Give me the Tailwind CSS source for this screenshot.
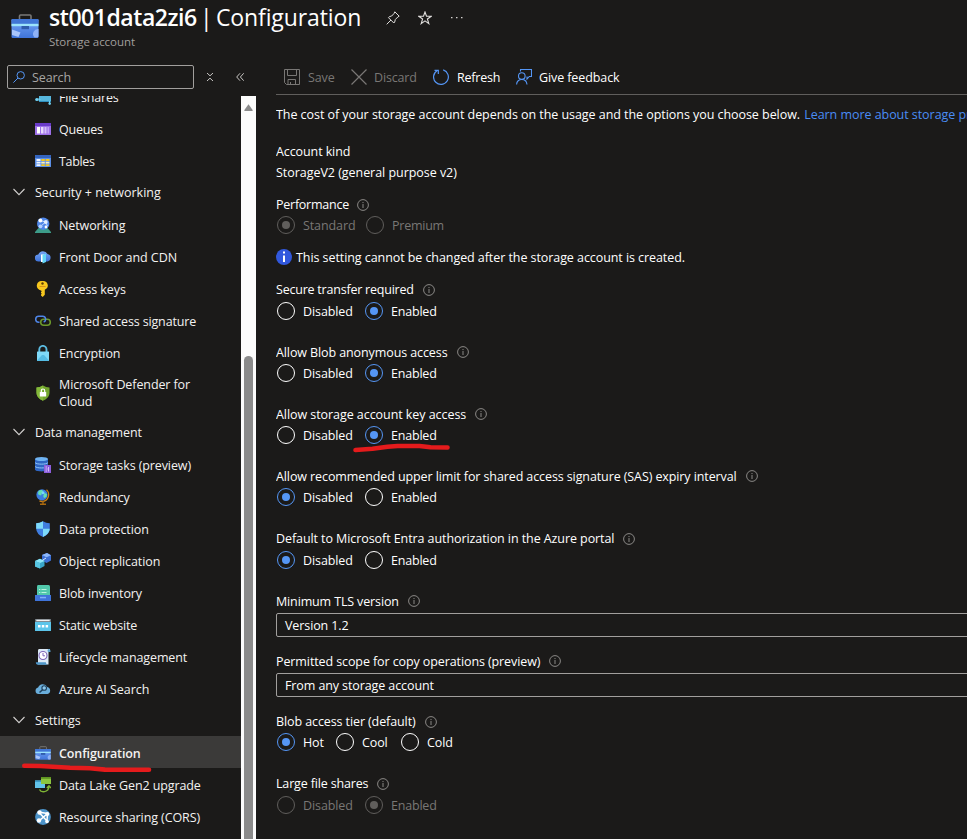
<!DOCTYPE html>
<html lang="en">
<head>
<meta charset="utf-8">
<title>st001data2zi6 | Configuration</title>
<script src="https://cdn.jsdelivr.net/npm/@tailwindcss/browser@4"></script>
</head>
<body class="bg-[#1b1a19]">
<svg class="absolute h-0 w-0">
  <defs>
    <linearGradient id="blueV" x1="0" y1="0" x2="0" y2="1"><stop offset="0" stop-color="#76a5f5"/><stop offset="1" stop-color="#3f74da"/></linearGradient>
    <symbol id="info" viewBox="0 0 12 12"><circle cx="6" cy="6" r="5.4" fill="none" stroke="#8a8886"/><path d="M6 5v4M6 3v1.1" stroke="#8a8886" fill="none"/></symbol>
    <symbol id="chev" viewBox="0 0 12 8"><path d="M.5 1 6 6.7 11.5 1" fill="none" stroke="#d2d0ce" stroke-width="1.1"/></symbol>
    <symbol id="toolbox" viewBox="0 0 28 24">
      <path d="M8.5 5V2a1 1 0 0 1 1-1h9.500a1 1 0 0 1 1 1v3" fill="none" stroke="#7b7977" stroke-width="1.6"/>
      <rect x=".5" y="5" width="27" height="19" rx="1.200" fill="url(#blueV)"/>
      <rect x=".5" y="5" width="27" height="5" rx="1" fill="#4076d6"/>
      <rect x=".5" y="9.800" width="27" height="2.400" fill="#9be3fb"/>
      <rect x="10.500" y="12" width="7.500" height="3.200" fill="#2f5cab"/>
      <path d="m1 15.500 8.500 3-2 4.500L1 21z" fill="#a9c5fa"/><path d="M27.500 15a5 5 0 0 0-4 8.500h3l1-1z" fill="#8fb2f6"/>
    </symbol>
  </defs>
</svg>
<div class="relative flex h-[839px] w-[967px] flex-col overflow-hidden whitespace-nowrap bg-[#1b1a19] font-['Open_Sans','Noto_Sans',sans-serif] text-[12.5px] leading-[16px] tracking-[-0.1px] text-[#f3f2f1]">

  <header class="flex h-[60px] shrink-0">
    <svg class="mt-[14px] ml-[11px] h-6 w-7"><use href="#toolbox"/></svg>
    <div class="ml-[10px] flex flex-col">
      <div class="flex h-[34px] items-center pt-[3px]">
        <h1 class="-mt-[4px] flex text-[23px] leading-[30px] tracking-[-0.12px] text-white"><span class="w-[151px] font-semibold tracking-[-0.45px]">st001data2zi6</span><span class="w-[16px]">|</span><span class="w-[147px]">Configuration</span></h1>
        <svg class="-mt-[1px] ml-[23px] h-[14px] w-[14px]" viewBox="0 0 14 14" fill="none" stroke="#e1dfdd"><path d="M8.800.8 13.200 5.200 11.800 6 9.300 8.500 8.700 11 7.800 12 2.500 6.700 3.300 5.700 5.700 5 8 2.500zM5 9 .7 13.300"/></svg>
        <svg class="-mt-[1px] ml-[18px] h-[14px] w-[14px]" viewBox="0 0 14 14" fill="none" stroke="#e1dfdd" stroke-width="1.100"><path d="m7 1 1.500 4.300h4.700L9.400 8l1.400 4.600L7 9.900l-3.800 2.700L4.600 8 .8 5.300h4.700z"/></svg>
        <svg class="-mt-[2px] ml-[19px] h-[3px] w-[12px]" viewBox="0 0 12 3" fill="#d2d0ce"><path d="M0 1h1.500v1.300H0zM5 1h1.500v1.300H5zM10 1h1.500v1.300H10z"/></svg>
      </div>
      <p class="text-[11.500px] tracking-[-0.040px] text-[#a19f9d]">Storage account</p>
    </div>
  </header>

  <div class="flex min-h-0 flex-1">
    <aside class="flex w-[256px] shrink-0 flex-col">
      <div class="flex h-[36px] shrink-0 items-start pt-[5px] pl-[7px]">
        <div class="flex h-6 w-[187px] items-center rounded-[2px] border border-[#a19f9d] pl-[5px] text-[#a8a6a4]">
          <svg class="mr-[7px] h-3 w-3" viewBox="0 0 12 12" fill="none" stroke="#5596f5"><circle cx="7.700" cy="4.300" r="3.700"/><path d="M5 7 .4 11.600"/></svg><span class="pt-[2px]">Search</span>
        </div>
        <svg class="mt-2 ml-[12px] h-2 w-[8px]" viewBox="0 0 8 8" fill="none" stroke="#c8c6c4"><path d="M1 0l3 2.800L7 0M1 8l3-2.800L7 8"/></svg>
        <svg class="mt-2 ml-[22px] h-2 w-[8px]" viewBox="0 0 8 8" fill="none" stroke="#c8c6c4"><path d="M4 .3.700 4 4 7.700M7.700.3 4.400 4l3.300 3.700"/></svg>
      </div>
      <div class="flex min-h-0 flex-1">
        <nav class="-mt-[16px] w-[241px] text-[#f3f2f1] [clip-path:inset(16px_0_0_0)] [&_span]:pt-[2px]">
          <a class="flex h-8 items-center pt-[2px] pl-[35px]"><svg class="mr-2 h-4 w-4" viewBox="0 0 16 16"><rect x="4" y="5" width="12" height="8" fill="#57b7dd"/><path d="M4 12h12v1H4z" fill="#2f8fc0"/><circle cx="1.700" cy="10.500" r="1.500" fill="#6fd0f2"/><path d="M2 10h3v1H2zM14.500 12v2" stroke="#6fd0f2" fill="none"/><circle cx="14.700" cy="14.600" r="1.300" fill="#6fd0f2"/></svg><span class="tracking-[-0.2px]">File shares</span></a>
          <a class="flex h-8 items-center pt-[2px] pl-[35px]"><svg class="mr-2 h-4 w-4" viewBox="0 0 16 16"><rect y="2" width="16" height="12" rx=".6" fill="#9d70e8"/><path d="M0 2.500q0-.5.5-.5h15q.5 0 .5.500V5H0z" fill="#6a3bc9"/><path d="M2 6h3v6.500H2z" fill="#fff"/><path d="M6 6h2.500v6.500H6z" fill="#e6dafc"/><path d="M9.500 6h2v6.500h-2z" fill="#d4c0f8"/><path d="M12.500 6H14v6.500h-1.500z" fill="#c1a5f4"/></svg><span class="tracking-[-0.2px]">Queues</span></a>
          <a class="flex h-8 items-center pt-[2px] pl-[35px]"><svg class="mr-2 h-4 w-4" viewBox="0 0 16 16"><rect y="2" width="16" height="12" rx=".6" fill="#5b8fe6"/><path d="M0 2.500q0-.5.5-.5h15q.5 0 .5.500V5H0z" fill="#3464bd"/><path d="M1.500 6h4v2h-4zM1.500 8.800h4v1.800h-4zM1.500 11.300h4V13h-4z" fill="#eef4ff"/><path d="M6.300 6h3.500v2H6.300zM10.700 6h3.800v2h-3.800zM6.300 11.300h3.500V13H6.300zM10.700 11.300h3.800V13h-3.800z" fill="#f5c91b"/><path d="M6.300 8.800h3.500v1.800H6.300zM10.700 8.800h3.800v1.800h-3.800z" fill="#fff0b0"/></svg><span class="tracking-[-0.35px]">Tables</span></a>

          <div class="flex h-8 items-center pl-[13px]"><svg class="mr-[10px] h-2 w-3"><use href="#chev"/></svg><span class="tracking-[0px]">Security + networking</span></div>
          <a class="flex h-8 items-center pt-[2px] pl-[35px]"><svg class="mr-2 h-4 w-4" viewBox="0 0 16 16"><path d="M3.500 11h9L16 15v1H0v-1z" fill="#3d9c89"/><circle cx="8.200" cy="6.700" r="6.200" fill="#4f86e8"/><path d="M5 3.500 10.500 5l-5 4.500M10.500 5l2 4" stroke="#cfe2ff" stroke-width=".9" fill="none"/><circle cx="5.400" cy="3.500" r="1.900" fill="#fff"/><circle cx="10.800" cy="5" r="1.900" fill="#e3eeff"/><circle cx="5.500" cy="9.300" r="1.900" fill="#b5d0ff"/><circle cx="11" cy="10" r="1.400" fill="#fff"/></svg><span>Networking</span></a>
          <a class="flex h-8 items-center pt-[2px] pl-[35px]"><svg class="mr-2 h-4 w-4" viewBox="0 0 16 16"><path d="M3.500 12.500A3.500 3.500 0 0 1 3.300 5.400 5 5 0 0 1 12.500 5a3.800 3.800 0 0 1-.2 7.500z" fill="url(#blueV)"/><path d="M6 5.500h3.500v7.500H6z" fill="#fff"/><path d="M7.500 6 11 4.500v8.500l-3.500 1.500z" fill="#62d6f8"/></svg><span class="tracking-[-0.04px]">Front Door and CDN</span></a>
          <a class="flex h-8 items-center pt-[2px] pl-[35px]"><svg class="mr-2 h-4 w-4" viewBox="0 0 16 16"><path d="M7.500 0a5 4.600 0 0 1 2.300 8.800v5L7.700 16 6 14.500v-1l.8-.8-.8-.8v-.8l.8-.9L6 9.400A4.900 4.700 0 0 1 7.500 0z" fill="#f7c71e"/><circle cx="7.500" cy="2.500" r="1.200" fill="#5c3d05"/><path d="M4.600 5.500h6" stroke="#d9901a" stroke-width="1"/></svg><span>Access keys</span></a>
          <a class="flex h-8 items-center pt-[2px] pl-[35px]"><svg class="mr-2 h-4 w-4" viewBox="0 0 16 16" fill="none" stroke-width="1.500"><rect x="5.700" y="6.200" width="9.600" height="6" rx="3" stroke="#6d9a2c"/><path d="M4.500 9.200h-.8a3 3 0 0 1 0-6h4a3 3 0 0 1 1 5.800" stroke="#4f86e8"/></svg><span class="tracking-[-0.14px]">Shared access signature</span></a>
          <a class="flex h-8 items-center pt-[2px] pl-[35px]"><svg class="mr-2 h-4 w-4" viewBox="0 0 16 16"><path d="M4.300 7V4.500a3.600 3.600 0 0 1 7.200 0V7" fill="none" stroke="#5bbbe0" stroke-width="1.900"/><rect x="2" y="6.500" width="12" height="9.500" rx=".6" fill="#7fd9f8"/><path d="m2 15.500 5-5.500h2l5 5.500v.5H2z" fill="#55bce4"/></svg><span>Encryption</span></a>
          <a class="flex h-12 items-center pt-[2px] pl-[35px] leading-[17px]"><svg class="mr-2 h-4 w-4" viewBox="0 0 16 16"><path d="M8 .5q3 2 6.500 2V8q0 5-6.500 7.800Q1.500 13 1.500 8V2.500Q5 2.500 8 .5z" fill="#72a52d"/><path d="M8 .5v15.300Q1.500 13 1.500 8V2.500Q5 2.500 8 .5z" fill="#83b83a"/><rect x="4.800" y="7" width="6.400" height="4.600" rx=".5" fill="#fff"/><path d="M6.300 7V5.700a1.700 1.700 0 0 1 3.400 0V7" fill="none" stroke="#fff" stroke-width="1.200"/></svg><span class="pt-0!">Microsoft Defender for<br>Cloud</span></a>

          <div class="flex h-8 items-center pl-[13px]"><svg class="mr-[10px] h-2 w-3"><use href="#chev"/></svg><span>Data management</span></div>
          <a class="flex h-8 items-center pt-[2px] pl-[35px]"><svg class="mr-2 h-4 w-4" viewBox="0 0 16 16"><path d="M0 2v10.500C0 15 13 15 13 12.500V2z" fill="#2f66c4"/><ellipse cx="6.500" cy="2" rx="6.500" ry="2" fill="#6fb3f2"/><path d="M0 5.500c1 2.200 12 2.200 13 0M0 9.300c1 2.200 12 2.200 13 0" stroke="#8ec3f7" fill="none"/><rect x="9" y="8" width="7" height="8" fill="#8c5ddb"/><path d="M10.500 10h1.500M10.500 12h2M10.500 14h1.500M13.500 10v4.500" stroke="#dccbfb" stroke-width=".9"/></svg><span>Storage tasks (preview)</span></a>
          <a class="flex h-8 items-center pt-[2px] pl-[35px]"><svg class="mr-2 h-4 w-4" viewBox="0 0 16 16"><path d="M11.500.8c3.800 3.500 2.500 11-4.500 11.700l-2.500-.5" fill="none" stroke="#c98017" stroke-width="1.300"/><path d="M8 12v3M5 15.300h6" stroke="#a9690f" stroke-width="1.400"/><circle cx="7" cy="5.800" r="5.600" fill="#3c7de0"/><path d="M3.500 2c2-1.500 4.500-1 4.500.5S6 4 6.500 5.500 3.500 6 3 5zM9.500 4l2.500 1-.5 3-2.500 1-.8-2z" fill="#62dfb4"/><circle cx="8" cy="3.800" r="1.500" fill="#79d8fa"/></svg><span class="tracking-[-0.15px]">Redundancy</span></a>
          <a class="flex h-8 items-center pt-[2px] pl-[35px]"><svg class="mr-2 h-4 w-4" viewBox="0 0 16 16"><path d="M8 .2q3 2 6.800 2V8Q14.500 13 8 16 1.500 13 1.200 8V2.200Q5 2.200 8 .2z" fill="#3f7de0"/><path d="M8 .2v7.600H1.200V2.200Q5 2.200 8 .2zM8 7.800h6.800Q14.500 13 8 16z" fill="#7ddafa"/></svg><span>Data protection</span></a>
          <a class="flex h-8 items-center pt-[2px] pl-[35px]"><svg class="mr-2 h-4 w-4" viewBox="0 0 16 16"><path d="m7 2 5-2 4 2.200v5.300L11.500 10 7 7.500z" fill="#3c6fd4"/><path d="m7 2 5-2 4 2.200-4.500 2z" fill="#8db7fa"/><path d="m0 8 5-2.200L9.500 8v5L5 15.500 0 13.500z" fill="#3aa6c9"/><path d="m0 8 5-2.200L9.500 8 5 10z" fill="#8ce6f7"/><path d="M5 10v5.500l-5-2V8z" fill="#58c6e2"/><path d="M7.500 7.300 11 5" stroke="#dcecff"/></svg><span>Object replication</span></a>
          <a class="flex h-8 items-center pt-[2px] pl-[35px]"><svg class="mr-2 h-4 w-4" viewBox="0 0 16 16"><path d="M3 0h10.500q1.500 0 1.500 1.500V11H2V1.500Q2 .3 3 0z" fill="#52c9ac"/><path d="M4 4.500h1.300M4 7.500h1.300M6.500 4.500h5M6.500 7.500h5" stroke="#b9f3e0" stroke-width="1.200"/><path d="M0 10h16v5.500q0 .5-.5.500H.5q-.5 0-.5-.5z" fill="#3f74da"/><path d="M5 11.800h6v1.500H5z" fill="#83b0fa"/></svg><span class="tracking-[-0.13px]">Blob inventory</span></a>
          <a class="flex h-8 items-center pt-[2px] pl-[35px]"><svg class="mr-2 h-4 w-4" viewBox="0 0 16 16"><rect y="2" width="16" height="12" rx=".5" fill="#5cc5ea"/><path d="M0 2h16v3H0z" fill="#69727a"/><path d="M1.300 2.700h13.400v1.500H1.300z" fill="#f2f2f2"/><path d="M3 8h2.500v2.500H3zM6.800 8h2.500v2.500H6.800zM10.600 8h2.500v2.500h-2.500z" fill="#fff"/></svg><span class="tracking-[-0.13px]">Static website</span></a>
          <a class="flex h-8 items-center pt-[2px] pl-[35px]"><svg class="mr-2 h-4 w-4" viewBox="0 0 16 16"><path d="M4 0h11q.8 1.500-1.500 3v12.500H3V1.500Q3 .4 4 0z" fill="#dceaf6"/><path d="M12.500 1.300Q12.800 0 14 0q1.500 0 1.500 3H13z" fill="#5ea4d3"/><path d="M.8 13.300h10q.2 2.200 2 2.500H2.500Q.8 15.500.8 13.300z" fill="#4d96c9"/><circle cx="8" cy="6.500" r="4" fill="#fff" stroke="#7d65b8" stroke-width="1.100"/><path d="M8 4v2.800h2" stroke="#7d65b8" fill="none"/></svg><span>Lifecycle management</span></a>
          <a class="flex h-8 items-center pt-[2px] pl-[35px]"><svg class="mr-2 h-4 w-4" viewBox="0 0 16 16"><path d="M3.500 13a3.300 3.300 0 0 1-.4-6.500A5 5 0 0 1 12.300 6a3.600 3.600 0 0 1 .2 7z" fill="#6aaedb"/><circle cx="9.200" cy="7" r="2.300" fill="#8bc6ea" stroke="#20415c" stroke-width="1.100"/><path d="M7.500 8.700 4.500 11.500" stroke="#20415c" stroke-width="1.500"/></svg><span class="tracking-[-0.05px]">Azure AI Search</span></a>

          <div class="flex h-8 items-center pl-[13px]"><svg class="mr-[10px] h-2 w-3"><use href="#chev"/></svg><span>Settings</span></div>
          <a class="flex h-8 items-center bg-[#3b3a39] pt-[2px] pl-[35px] font-semibold"><svg class="mr-2 h-[14px] w-4"><use href="#toolbox"/></svg><span class="tracking-[-0.100px]">Configuration</span></a>
          <a class="flex h-8 items-center pt-[2px] pl-[35px]"><svg class="mr-2 h-4 w-4" viewBox="0 0 16 16"><rect x="0" y="3.500" width="10" height="7.500" fill="#62c3ea"/><path d="M0 3.500h10V5H0z" fill="#3a9ac7"/><rect x="6" y="0" width="10" height="7" fill="#8cc53f"/><path d="M6 0h10v1.800H6z" fill="#5f9421"/><path d="M4.500 12.500c1.500 3.200 8.800 3.500 9.500-3M11.800 11l2.200-2.200L16 11" fill="none" stroke="#7fb535" stroke-width="1.400"/></svg><span>Data Lake Gen2 upgrade</span></a>
          <a class="flex h-8 items-center pt-[2px] pl-[35px]"><svg class="mr-2 h-4 w-4" viewBox="0 0 16 16"><circle cx="8" cy="8" r="7.900" fill="#4c93c9"/><path d="m3 3 9.500 1.500L4 12M12.500 4.500 12 12M4.500 4l8 8.500" stroke="#fff" stroke-width="1.500" fill="none"/><circle cx="4.500" cy="3.500" r="2.200" fill="#fff"/><circle cx="12.300" cy="5" r="2" fill="#fff"/><circle cx="4" cy="11.500" r="2.200" fill="#fff"/><circle cx="12" cy="12.500" r="1.800" fill="#fff"/></svg><span>Resource sharing (CORS)</span></a>
        </nav>
        <div class="flex w-[15px] flex-col items-center bg-[#fcfcfc] pt-2">
          <svg class="h-[7px] w-[9px]" viewBox="0 0 9 7"><path d="M4.500.3 8.800 6.200q0 .8-.8.800H1q-.8 0-.8-.8z" fill="#8b8b8b"/></svg>
          <div class="mt-[245px] w-[9px] flex-1 rounded-t-[5px] bg-[#8b8b8b]"></div>
        </div>
      </div>
    </aside>

    <main class="ml-5 min-w-0 flex-1 overflow-hidden text-white [&_span]:pt-[2px]">
      <div class="flex h-[35px] items-center border-b border-[#605e5c] pl-2">
        <svg class="h-4 w-4" viewBox="0 0 16 16" fill="none" stroke="#797775"><path d="M.5.5h15v15H2.500l-2-2zM3.500.5v6h9v-6M4 15.500v-5h7.500v5M6.500 15.500v-2.500"/></svg>
        <span class="ml-2 w-[43px] text-[#797775]">Save</span>
        <svg class="h-4 w-4" viewBox="0 0 16 16" fill="none" stroke="#797775" stroke-width="1.200"><path d="m.5.5 15 15m0-15-15 15"/></svg>
        <span class="ml-[7px] w-[59px] tracking-[-0.15px] text-[#797775]">Discard</span>
        <svg class="h-4 w-4" viewBox="0 0 16 16" fill="none" stroke="#5596f5" stroke-width="1.200"><path d="M10.200.9A7.400 7.400 0 1 1 4 1.700M1.500 1.300h3.800v3.600"/></svg>
        <span class="ml-[8px] w-[59px] tracking-[-0.2px]">Refresh</span>
        <svg class="h-4 w-4" viewBox="0 0 16 16" fill="none" stroke="#5596f5" stroke-width="1.100"><path d="M4.500 2.500v-2h11v7h-2.200L11 10V7.500M.6 15.500c0-3.300 2.500-5 5.200-5s4.900 2 5.200 5"/><circle cx="5.800" cy="7" r="3.300"/></svg>
        <span class="ml-[7px]">Give feedback</span>
      </div>

      <p class="mt-[12px] tracking-[-0.052px]">The cost of your storage account depends on the usage and the options you choose below. <a class="ml-[1px] text-[#4a8df5]">Learn more about storage pricing</a></p>
      <p class="mt-[21px]">Account kind</p>
      <p class="mt-[5px] tracking-[-0.04px]">StorageV2 (general purpose v2)</p>

      <section class="mt-[13px]">
        <div class="flex h-5 items-center"><span class="tracking-[-0.25px]">Performance</span><svg class="mt-[2px] ml-[8px] h-3 w-3"><use href="#info"/></svg></div>
        <div class="flex h-[22px] items-center pl-[1px] text-[#797775]">
          <i class="grid h-[18px] w-[18px] place-items-center rounded-full border border-[#605e5c]"><b class="h-2 w-2 rounded-full bg-[#605e5c]"></b></i><span class="mr-[12px] ml-2 w-[51px]">Standard</span>
          <i class="h-[18px] w-[18px] rounded-full border border-[#605e5c]"></i><span class="ml-2 tracking-[-0.25px]">Premium</span>
        </div>
      </section>
      <div class="mt-[11px] flex h-5 items-center"><svg class="mr-1 h-4 w-4" viewBox="0 0 16 16"><circle cx="8" cy="8" r="8" fill="#3158dd"/><path d="M8 6.500V13M8 2.500v2" stroke="#fff" stroke-width="2"/></svg><span class="pt-[1px]! tracking-[-0.07px]">This setting cannot be changed after the storage account is created.</span></div>

      <section class="mt-3">
        <div class="flex h-5 items-center"><span class="tracking-[-0.22px]">Secure transfer required</span><svg class="mt-[2px] ml-[9px] h-3 w-3"><use href="#info"/></svg></div>
        <div class="mt-[1px] flex h-[22px] items-center pl-[1px]">
          <i class="h-[18px] w-[18px] rounded-full border border-white"></i><span class="mr-[12px] ml-2 w-[50px]">Disabled</span>
          <i class="grid h-[18px] w-[18px] place-items-center rounded-full border border-[#5596f5]"><b class="h-2 w-2 rounded-full bg-[#5596f5]"></b></i><span class="ml-2 tracking-[-0.2px]">Enabled</span>
        </div>
      </section>
      <section class="mt-5">
        <div class="flex h-5 items-center"><span>Allow Blob anonymous access</span><svg class="ml-[9px] h-3 w-3"><use href="#info"/></svg></div>
        <div class="flex h-[22px] items-center pl-[1px]">
          <i class="h-[18px] w-[18px] rounded-full border border-white"></i><span class="mr-[12px] ml-2 w-[50px]">Disabled</span>
          <i class="grid h-[18px] w-[18px] place-items-center rounded-full border border-[#5596f5]"><b class="h-2 w-2 rounded-full bg-[#5596f5]"></b></i><span class="ml-2 tracking-[-0.2px]">Enabled</span>
        </div>
      </section>
      <section class="mt-5">
        <div class="flex h-5 items-center"><span class="tracking-[-0.06px]">Allow storage account key access</span><svg class="ml-[9px] h-3 w-3"><use href="#info"/></svg></div>
        <div class="flex h-[22px] items-center pl-[1px]">
          <i class="h-[18px] w-[18px] rounded-full border border-white"></i><span class="mr-[12px] ml-2 w-[50px]">Disabled</span>
          <i class="grid h-[18px] w-[18px] place-items-center rounded-full border border-[#5596f5]"><b class="h-2 w-2 rounded-full bg-[#5596f5]"></b></i><span class="ml-2 tracking-[-0.2px]">Enabled</span>
        </div>
      </section>
      <section class="mt-5">
        <div class="flex h-5 items-center"><span>Allow recommended upper limit for shared access signature (SAS) expiry interval</span><svg class="ml-[9px] h-3 w-3"><use href="#info"/></svg></div>
        <div class="flex h-[22px] items-center pl-[1px]">
          <i class="grid h-[18px] w-[18px] place-items-center rounded-full border border-[#5596f5]"><b class="h-2 w-2 rounded-full bg-[#5596f5]"></b></i><span class="mr-[12px] ml-2 w-[50px]">Disabled</span>
          <i class="h-[18px] w-[18px] rounded-full border border-white"></i><span class="ml-2 tracking-[-0.2px]">Enabled</span>
        </div>
      </section>
      <section class="mt-5">
        <div class="flex h-5 items-center"><span class="tracking-[-0.08px]">Default to Microsoft Entra authorization in the Azure portal</span><svg class="mt-[2px] ml-[9px] h-3 w-3"><use href="#info"/></svg></div>
        <div class="mt-[1px] flex h-[22px] items-center pl-[1px]">
          <i class="grid h-[18px] w-[18px] place-items-center rounded-full border border-[#5596f5]"><b class="h-2 w-2 rounded-full bg-[#5596f5]"></b></i><span class="mr-[12px] ml-2 w-[50px]">Disabled</span>
          <i class="h-[18px] w-[18px] rounded-full border border-white"></i><span class="ml-2 tracking-[-0.2px]">Enabled</span>
        </div>
      </section>
      <section class="mt-5">
        <div class="flex h-5 items-center"><span class="tracking-[-0.14px]">Minimum TLS version</span><svg class="ml-[9px] h-3 w-3"><use href="#info"/></svg></div>
        <div class="mt-[2px] -mr-2 flex h-6 items-center rounded-[2px] border border-[#a19f9d] pl-2"><span>Version 1.2</span></div>
      </section>
      <section class="mt-[14px]">
        <div class="flex h-5 items-center"><span>Permitted scope for copy operations (preview)</span><svg class="ml-[9px] h-3 w-3"><use href="#info"/></svg></div>
        <div class="mt-[2px] -mr-2 flex h-6 items-center rounded-[2px] border border-[#a19f9d] pl-2"><span>From any storage account</span></div>
      </section>
      <section class="mt-[14px]">
        <div class="flex h-5 items-center"><span>Blob access tier (default)</span><svg class="mt-[2px] ml-[9px] h-3 w-3"><use href="#info"/></svg></div>
        <div class="flex h-[22px] items-center pl-[1px]">
          <i class="grid h-[18px] w-[18px] place-items-center rounded-full border border-[#5596f5]"><b class="h-2 w-2 rounded-full bg-[#5596f5]"></b></i><span class="mr-[12px] ml-2 w-[21px]">Hot</span>
          <i class="h-[18px] w-[18px] rounded-full border border-white"></i><span class="mr-[12px] ml-2 w-[27px]">Cool</span>
          <i class="h-[18px] w-[18px] rounded-full border border-white"></i><span class="ml-2">Cold</span>
        </div>
      </section>
      <section class="mt-5">
        <div class="flex h-5 items-center"><span class="tracking-[-0.16px]">Large file shares</span><svg class="mt-[2px] ml-[9px] h-3 w-3"><use href="#info"/></svg></div>
        <div class="mt-[1px] flex h-[22px] items-center pl-[1px] text-[#797775]">
          <i class="h-[18px] w-[18px] rounded-full border border-[#605e5c]"></i><span class="mr-[12px] ml-2 w-[50px]">Disabled</span>
          <i class="grid h-[18px] w-[18px] place-items-center rounded-full border border-[#605e5c]"><b class="h-2 w-2 rounded-full bg-[#605e5c]"></b></i><span class="ml-2 tracking-[-0.2px]">Enabled</span>
        </div>
      </section>
    </main>
  </div>

  <!-- red marker strokes drawn over the page -->
  <svg class="absolute top-0 left-0 h-[839px] w-[967px]" viewBox="0 0 967 839" fill="none" stroke="#e51b1c" stroke-width="4.600" stroke-linecap="round" stroke-linejoin="round">
    <path d="M24.300 765.700 40 766l30 1.700 20 .6 15 1.300 44 .2"/>
    <path d="m355.500 450 17-1.200 15-2 10-.8h22l11 1.300 17 .2"/>
  </svg>
</div>
</body>
</html>
